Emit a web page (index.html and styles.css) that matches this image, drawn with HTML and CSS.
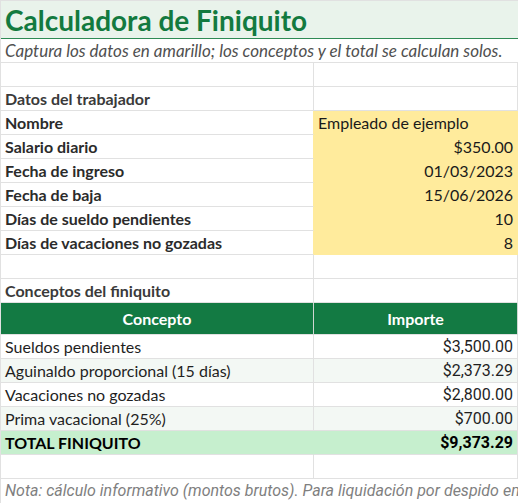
FILE: index.html
```html
<!DOCTYPE html>
<html lang="es">
<head>
<meta charset="utf-8">
<title>Calculadora de Finiquito</title>
<link rel="stylesheet" href="styles.css">
</head>
<body>
<div class="sheet">
  <div class="cell span title">Calculadora de Finiquito</div>
  <div class="cell span subtitle">Captura los datos en amarillo; los conceptos y el total se calculan solos.</div>
  <div class="cell"></div><div class="cell"></div>
  <div class="cell section">Datos del trabajador</div><div class="cell"></div>
  <div class="cell label pre-input">Nombre</div><div class="cell input">Empleado de ejemplo</div>
  <div class="cell label pre-input">Salario diario</div><div class="cell input num">$350.00</div>
  <div class="cell label pre-input">Fecha de ingreso</div><div class="cell input num">01/03/2023</div>
  <div class="cell label pre-input">Fecha de baja</div><div class="cell input num">15/06/2026</div>
  <div class="cell label pre-input">Días de sueldo pendientes</div><div class="cell input num">10</div>
  <div class="cell label pre-input">Días de vacaciones no gozadas</div><div class="cell input num">8</div>
  <div class="cell"></div><div class="cell"></div>
  <div class="cell section">Conceptos del finiquito</div><div class="cell"></div>
  <div class="cell head">Concepto</div><div class="cell head">Importe</div>
  <div class="cell item">Sueldos pendientes</div><div class="cell item amount">$3,500.00</div>
  <div class="cell item alt">Aguinaldo proporcional (15 días)</div><div class="cell item amount alt">$2,373.29</div>
  <div class="cell item">Vacaciones no gozadas</div><div class="cell item amount">$2,800.00</div>
  <div class="cell item alt">Prima vacacional (25%)</div><div class="cell item amount alt">$700.00</div>
  <div class="cell total">TOTAL FINIQUITO</div><div class="cell total amount">$9,373.29</div>
  <div class="cell"></div><div class="cell"></div>
  <div class="cell span note">Nota: cálculo informativo (montos brutos). Para liquidación por despido empleador consulta a un especialista.</div>
</div>
</body>
</html>
```

FILE: styles.css
```css
html, body {
  margin: 0;
  padding: 0;
  background: #ffffff;
}

.sheet {
  display: grid;
  grid-template-columns: 313px 204px;
  border-top: 1px solid #e1e1e1;
  border-left: 1px solid #e1e1e1;
  width: 517px;
  overflow: hidden;
  font-family: Lato, "Noto Sans", sans-serif;
  font-size: 16px;
  color: #1f1f1f;
}

.cell {
  box-sizing: border-box;
  height: 24px;
  border-right: 1px solid #e1e1e1;
  border-bottom: 1px solid #e1e1e1;
  padding: 0 4px;
  display: flex;
  align-items: center;
  white-space: nowrap;
  overflow: hidden;
  line-height: 1;
}

.span {
  grid-column: 1 / 3;
}

.title {
  height: 38px;
  background: #e9f3eb;
  border-bottom: 1px solid #2f8a55;
  border-right: none;
  color: #137a3f;
  font-weight: 700;
  font-size: 28px;
  padding-top: 1px;
}

.subtitle {
  font-style: italic;
  color: #505050;
  font-size: 17px;
  border-right: none;
}

.section {
  font-weight: 700;
  color: #3a3a3a;
}

.label {
  font-weight: 700;
  color: #2b2b2b;
}

.pre-input {
  border-right-color: #ffeb9c;
}

.input {
  background: #ffeb9c;
  border-color: #ffeb9c;
  color: #1a1a1a;
}

.num {
  justify-content: flex-end;
}

.head {
  height: 32px;
  background: #137a43;
  color: #ffffff;
  font-weight: 700;
  justify-content: center;
  border-right-color: #d0d6d2;
  border-bottom-color: #e1e1e1;
}

.item {
  color: #1f1f1f;
}

.amount {
  justify-content: flex-end;
  font-family: Roboto, "Liberation Sans", sans-serif;
  font-size: 16px;
}

.alt {
  background: #f3f8f4;
}

.total {
  background: #c6efce;
  font-weight: 700;
  color: #000000;
  border-right-color: #c6efce;
}

.total.amount {
  border-right-color: #e1e1e1;
}

.note {
  font-family: Roboto, "Liberation Sans", sans-serif;
  font-style: italic;
  color: #7f7f7f;
  border-right: none;
  border-bottom: none;
}
```
